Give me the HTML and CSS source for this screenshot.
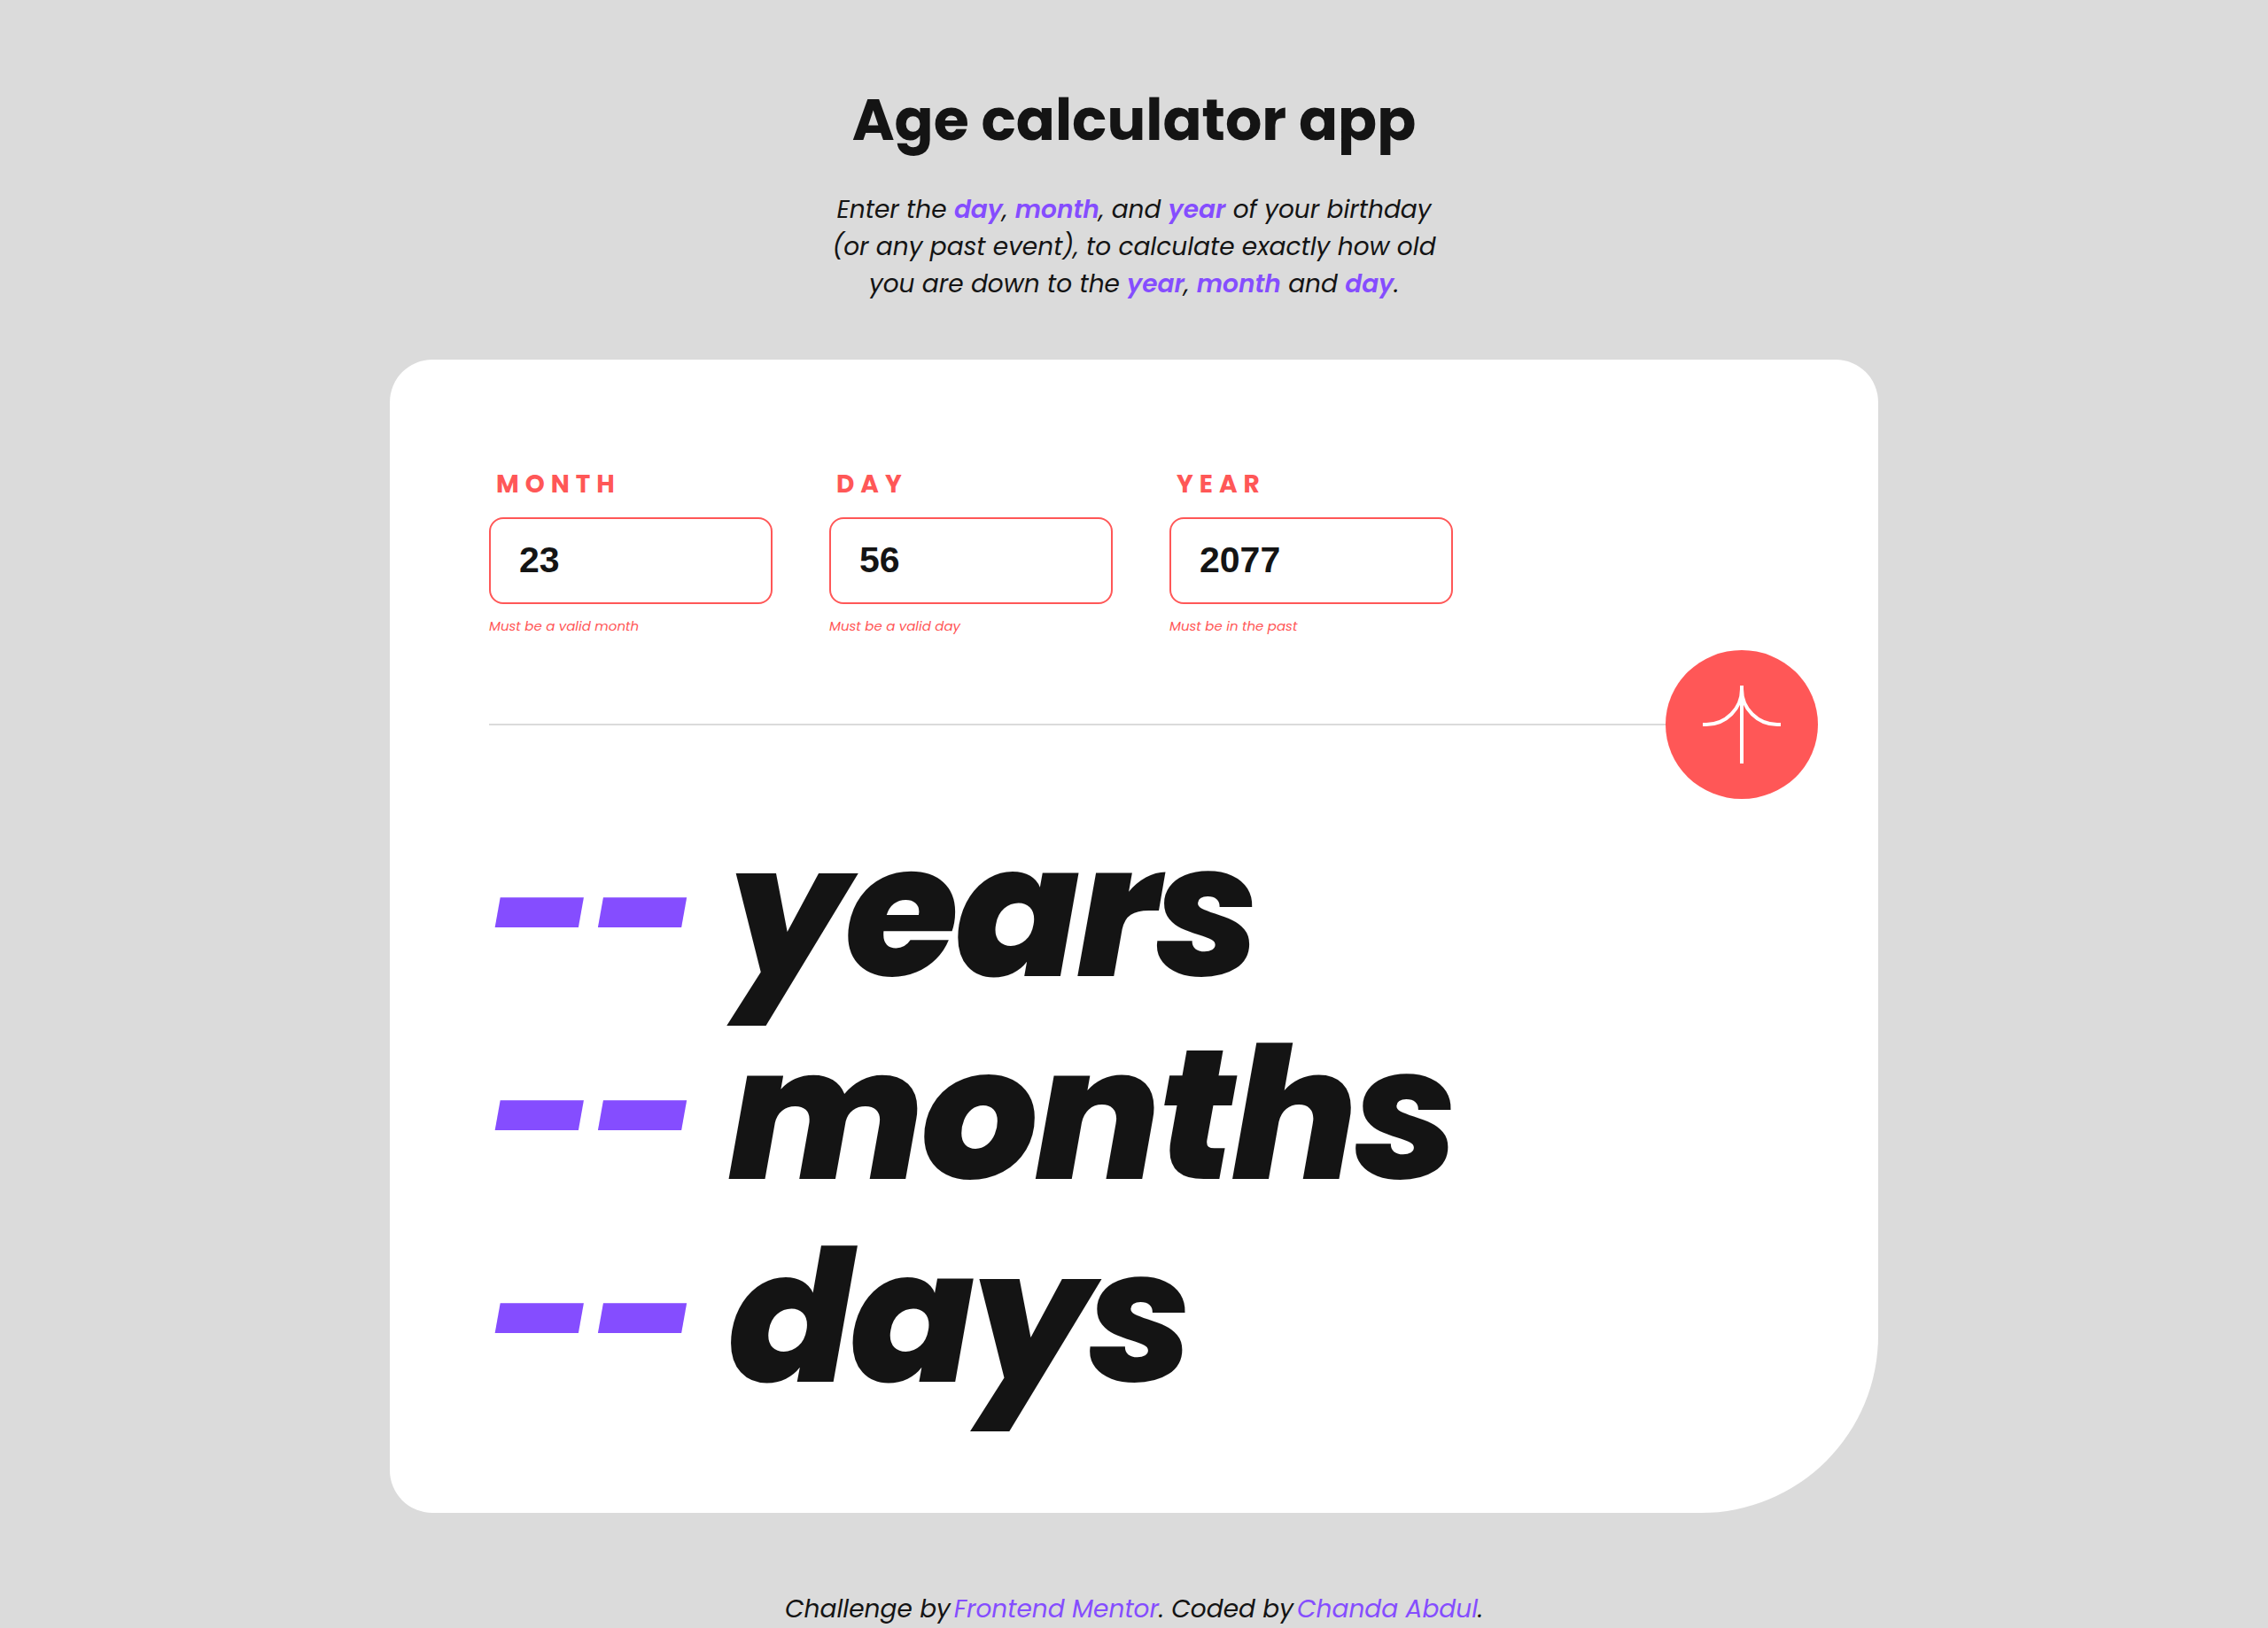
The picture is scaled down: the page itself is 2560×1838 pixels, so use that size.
FILE: index.html
```html
<!DOCTYPE html>
<html lang="en">
<head>
<meta charset="utf-8">
<meta name="viewport" content="width=device-width, initial-scale=1">
<title>Age calculator app</title>
<link rel="stylesheet" href="styles.css">
</head>
<body>
<header class="intro">
  <h1 class="title">Age calculator app</h1>
  <p class="lead">Enter the <strong>day</strong>, <strong>month</strong>, and <strong>year</strong> of your birthday<br>(or any past event), to calculate exactly how old<br>you are down to the <strong>year</strong>, <strong>month</strong> and <strong>day</strong>.</p>
</header>
<main class="card">
  <form class="form">
    <div class="fields">
      <div class="field">
        <label class="label" for="month">MONTH</label>
        <input class="input" id="month" type="text" inputmode="numeric" value="23">
        <p class="error">Must be a valid month</p>
      </div>
      <div class="field">
        <label class="label" for="day">DAY</label>
        <input class="input" id="day" type="text" inputmode="numeric" value="56">
        <p class="error">Must be a valid day</p>
      </div>
      <div class="field">
        <label class="label" for="year">YEAR</label>
        <input class="input" id="year" type="text" inputmode="numeric" value="2077">
        <p class="error">Must be in the past</p>
      </div>
    </div>
    <div class="submit-row">
      <hr class="rule">
      <button class="submit" type="button" aria-label="Calculate age">
        <svg class="arrow" viewBox="0 0 88 88" fill="none" stroke="currentColor" stroke-width="4"><path d="M0 44H4A40 40 0 0 0 44 4V0M44 0V88M88 44H84A40 40 0 0 1 44 4V0"/></svg>
      </button>
    </div>
  </form>
  <section class="results">
    <p class="result"><span class="value">--</span><span>years</span></p>
    <p class="result"><span class="value">--</span><span>months</span></p>
    <p class="result"><span class="value">--</span><span>days</span></p>
  </section>
</main>
<footer class="footer">Challenge by<a href="#">Frontend Mentor</a>. Coded by<a href="#">Chanda Abdul</a>.</footer>
</body>
</html>
```

FILE: styles.css
```css
* {
  box-sizing: border-box;
  margin: 0;
}

body {
  min-height: 100vh;
  padding: 96px 32px 0;
  background: #dbdbdb;
  color: #141414;
  font-family: Poppins, Inter, sans-serif;
  font-size: 28px;
  line-height: 42px;
}

.intro {
  text-align: center;
}

.title {
  font-size: 65px;
  font-weight: 700;
  line-height: 80px;
}

.lead {
  margin-top: 40px;
  font-style: italic;
}

.lead strong {
  color: #854dff;
  font-weight: 600;
}

.card {
  max-width: 1680px;
  margin: 64px auto 0;
  padding: 120px 68px 106px 112px;
  border-radius: 48px 48px 200px 48px;
  background: #fff;
}

.fields {
  display: flex;
  gap: 64px;
}

.field {
  display: flex;
  flex: 0 1 320px;
  flex-direction: column;
  min-width: 0;
}

.label {
  padding-left: 8px;
  color: #ff5757;
  font-weight: 700;
  letter-spacing: 7px;
}

.input {
  width: 100%;
  height: 98px;
  margin-top: 16px;
  padding: 0 32px 2px;
  border: 2px solid #ff5757;
  border-radius: 16px;
  background: #fff;
  color: #141414;
  font: 700 41px "Liberation Sans", Arial, sans-serif;
}

.error {
  margin-top: 13px;
  color: #ff5757;
  font-size: 15px;
  font-style: italic;
  line-height: 24px;
}

.submit-row {
  display: flex;
  align-items: center;
  margin-top: 15px;
}

.rule {
  flex: 1;
  height: 2px;
  border: 0;
  background: #dbdbdb;
}

.submit {
  display: grid;
  place-items: center;
  width: 172px;
  height: 168px;
  padding: 0;
  border: 0;
  border-radius: 50%;
  background: #ff5757;
  color: #fff;
}

.arrow {
  width: 88px;
  height: 88px;
}

.results {
  margin-top: 13px;
}

.result {
  display: flex;
  gap: 37px;
  font-size: 208px;
  font-style: italic;
  font-weight: 800;
  letter-spacing: -4px;
  line-height: 229px;
}

.value {
  color: #854dff;
}

.footer {
  padding-top: 88px;
  font-style: italic;
  text-align: center;
}

.footer a {
  margin-left: 4px;
  color: #854dff;
  text-decoration: none;
}
```
